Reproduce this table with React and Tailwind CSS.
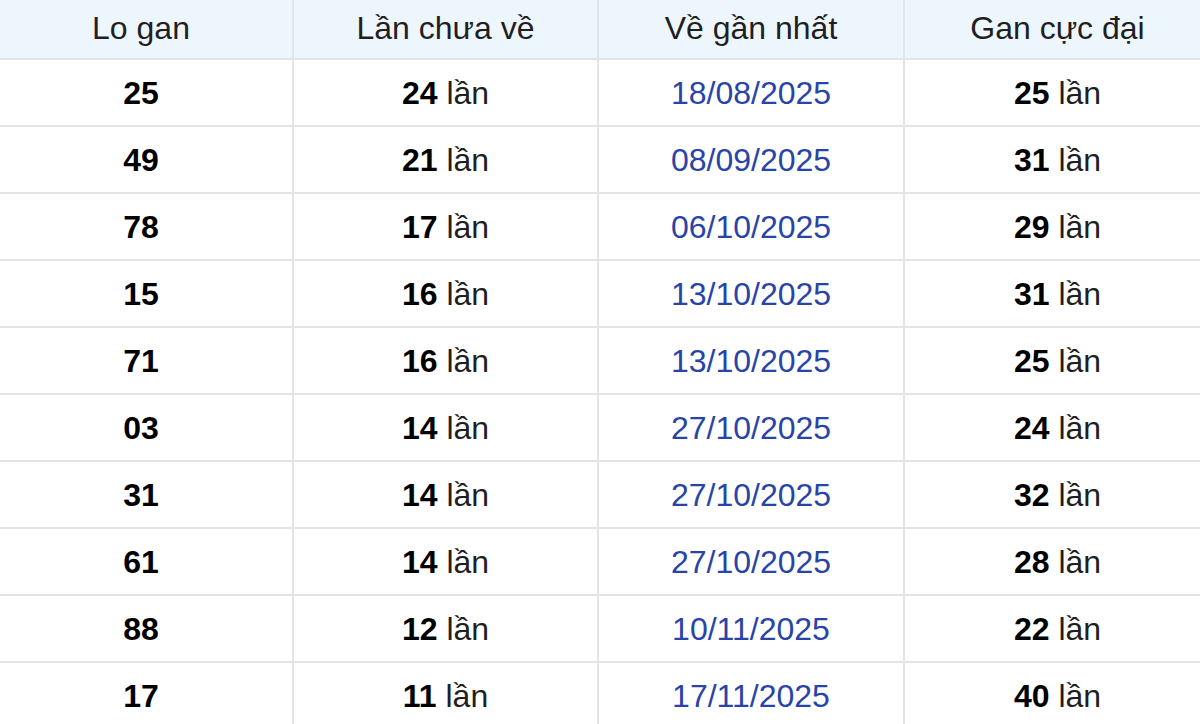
import React from "react";

const rows = [
  ["25", "24", "18/08/2025", "25"],
  ["49", "21", "08/09/2025", "31"],
  ["78", "17", "06/10/2025", "29"],
  ["15", "16", "13/10/2025", "31"],
  ["71", "16", "13/10/2025", "25"],
  ["03", "14", "27/10/2025", "24"],
  ["31", "14", "27/10/2025", "32"],
  ["61", "14", "27/10/2025", "28"],
  ["88", "12", "10/11/2025", "22"],
  ["17", "11", "17/11/2025", "40"],
];

const cols = "grid grid-cols-[304px_305px_306px_305px]";

export default function App() {
  return (
    <div
      className="w-[1200px] h-[724px] overflow-hidden bg-white"
      style={{ fontFamily: '"Liberation Sans", Arial, sans-serif' }}
    >
      <div className="w-[1220px] -ml-[10px]">
        <div className={`${cols} h-[60px] bg-[#eef6fd] border-b-2 border-[#e2e4e6] text-[32px] text-[#1f1f1f]`}>
          {["Lo gan", "Lần chưa về", "Về gần nhất", "Gan cực đại"].map((h, i) => (
            <div
              key={h}
              className={`flex items-center justify-center pb-[3px] ${i < 3 ? "border-r-2 border-[#e2e4e6]" : ""}`}
            >
              {h}
            </div>
          ))}
        </div>
        {rows.map((r, idx) => (
          <div key={idx} className={`${cols} h-[67px] border-b-2 border-[#e4e4e4] text-[32px]`}>
            <div className="flex items-center justify-center border-r-2 border-[#e4e4e4] font-bold text-black">
              {r[0]}
            </div>
            <div className="flex items-center justify-center border-r-2 border-[#e4e4e4] text-[#1f1f1f] whitespace-pre">
              <span className="font-bold text-black">{r[1]}</span>
              <span> lần</span>
            </div>
            <div className="flex items-center justify-center border-r-2 border-[#e4e4e4] text-[#2844a9]">
              {r[2]}
            </div>
            <div className="flex items-center justify-center text-[#1f1f1f] whitespace-pre">
              <span className="font-bold text-black">{r[3]}</span>
              <span> lần</span>
            </div>
          </div>
        ))}
      </div>
    </div>
  );
}
